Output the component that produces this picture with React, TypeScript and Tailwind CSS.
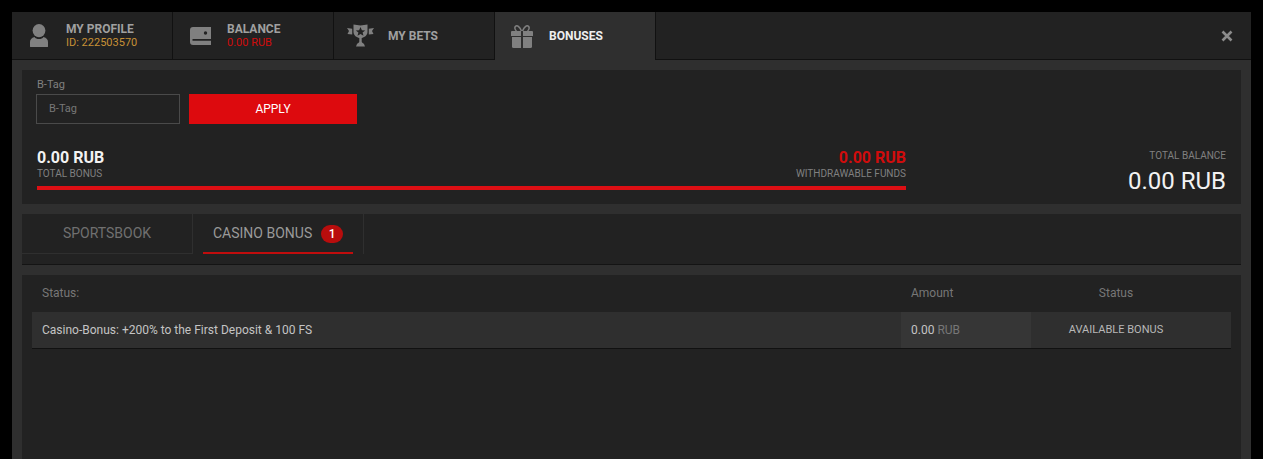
import React from "react";

function ProfileIcon() {
  return (
    <svg width="20" height="23" viewBox="0 0 20 23" fill="#808080">
      <ellipse cx="10" cy="6.6" rx="6.4" ry="6.6" />
      <path d="M5.5 13 C7 15.8 13 15.8 14.5 13 C17.5 14 19 15.5 19 18 V22.5 Q19 23 18 23 H2 Q1 23 1 22.5 V18 C1 15.5 2.5 14 5.5 13Z" />
    </svg>
  );
}

function WalletIcon() {
  return (
    <svg width="21" height="18" viewBox="0 0 21 18" fill="#808080">
      <path d="M3 0 H21 V12 H2.5 V13.8 H21 V18 H3 Q0 18 0 15 V3 Q0 0 3 0Z" />
      <circle cx="15.5" cy="6" r="1.7" fill="#222" />
    </svg>
  );
}

function TrophyIcon() {
  return (
    <svg width="27" height="23" viewBox="0 0 27 23" fill="#808080">
      <path d="M6.5 0.5 L13.5 1.5 L20.5 0.5 V8 C20.5 11.5 17 13.5 14.7 14 V17.5 C14.7 18.5 15.8 19 17 20 L18 22.5 H9 L10 20 C11.2 19 12.3 18.5 12.3 17.5 V14 C10 13.5 6.5 11.5 6.5 8Z" />
      <path d="M13.5 3 L14.9 6.2 L18.2 6.4 L15.6 8.5 L16.5 11.7 L13.5 9.9 L10.5 11.7 L11.4 8.5 L8.8 6.4 L12.1 6.2Z" fill="#222" />
      <path d="M0 4 L5.2 4.8 V10.5 L0.5 10 L2 7Z" />
      <path d="M27 4 L21.8 4.8 V10.5 L26.5 10 L25 7Z" />
    </svg>
  );
}

function GiftIcon() {
  return (
    <svg width="22" height="23" viewBox="0 0 22 23" fill="#808080">
      <path d="M10.5 6 C8.5 1.5 6.5 0.3 5 1 C3.2 1.8 3.6 4.6 5.5 6" fill="none" stroke="#808080" strokeWidth="1.5" />
      <path d="M11.5 6 C13.5 1.5 15.5 0.3 17 1 C18.8 1.8 18.4 4.6 16.5 6" fill="none" stroke="#808080" strokeWidth="1.5" />
      <path d="M1 6 H10 V11 H0 V7 Q0 6 1 6Z" />
      <path d="M12 6 H21 Q22 6 22 7 V11 H12Z" />
      <path d="M1 12 H10 V23 H2.5 Q1 23 1 21.5Z" />
      <path d="M12 12 H21 V21.5 Q21 23 19.5 23 H12Z" />
    </svg>
  );
}

function NavTab({
  icon,
  title,
  sub,
  subColor,
  active,
  className,
}: {
  icon: React.ReactNode;
  title: string;
  sub?: string;
  subColor?: string;
  active?: boolean;
  className: string;
}) {
  return (
    <div
      className={`w-[160px] h-full flex items-center mr-px ${className} ${
        active ? "bg-[#2f2f2f]" : "border-b border-[#111]"
      }`}
    >
      <div className="shrink-0 flex items-center">{icon}</div>
      <div className="flex flex-col">
        <span
          className={`text-[12px] leading-[14px] font-bold uppercase ${
            active ? "text-[#eeeeee]" : "text-[#a0a0a0]"
          }`}
        >
          {title}
        </span>
        {sub && (
          <span className={`text-[11px] leading-[13px] ${subColor}`}>{sub}</span>
        )}
      </div>
    </div>
  );
}

export default function App() {
  return (
    <div className="h-[459px] overflow-hidden bg-black pt-3 px-3 font-['Roboto',sans-serif]">
      <div className="w-[1239px] h-[447px] bg-[#2f2f2f] flex flex-col">
        <header className="h-[48px] shrink-0 flex bg-[#222222]">
          <div className="flex">
            <NavTab
              className="pl-[17px] gap-[17px]"
              icon={<ProfileIcon />}
              title="My Profile"
              sub="ID: 222503570"
              subColor="text-[#c79136]"
            />
            <div className="w-px bg-[#111] -ml-px" />
            <NavTab
              className="pl-[17px] gap-[16px]"
              icon={<WalletIcon />}
              title="Balance"
              sub="0.00 RUB"
              subColor="text-[#d00c0c]"
            />
            <div className="w-px bg-[#111] -ml-px" />
            <NavTab className="pl-[13px] gap-[14px]" icon={<TrophyIcon />} title="My Bets" />
            <div className="w-px bg-[#111] -ml-px" />
            <NavTab className="pl-[16px] gap-[16px]" icon={<GiftIcon />} title="Bonuses" active />
            <div className="w-px bg-[#111] -ml-px" />
          </div>
          <div className="flex-1 border-b border-[#111] flex items-center justify-end pr-[18px]">
            <svg width="12" height="12" viewBox="0 0 12 12" stroke="#8c8c8c" strokeWidth="2.6">
              <path d="M1.5 1.5 L10.5 10.5 M10.5 1.5 L1.5 10.5" />
            </svg>
          </div>
        </header>

        <main className="flex-1 px-[10px] pt-[10px] flex flex-col gap-[10px]">
          <section className="h-[134px] shrink-0 bg-[#222222] px-[15px] pt-[8px] flex">
            <div className="w-[869px]">
              <div className="text-[11px] leading-[13px] text-[#808080]">B-Tag</div>
              <div className="flex gap-[9px] mt-[3px] -ml-px">
                <div className="w-[144px] h-[30px] border border-[#4a4a4a] pl-[12px] flex items-center text-[11px] text-[#777777]">
                  B-Tag
                </div>
                <button className="w-[168px] h-[30px] bg-[#dd0a0e] text-white text-[12px]">
                  APPLY
                </button>
              </div>
              <div className="mt-[25px] flex justify-between">
                <div>
                  <div className="text-[16px] leading-[18px] font-bold text-[#f2f2f2]">0.00 RUB</div>
                  <div className="text-[10px] leading-[12px] text-[#808080] mt-px">TOTAL BONUS</div>
                </div>
                <div className="text-right">
                  <div className="text-[16px] leading-[18px] font-bold text-[#d00c0c]">0.00 RUB</div>
                  <div className="text-[10px] leading-[12px] text-[#808080] mt-px">WITHDRAWABLE FUNDS</div>
                </div>
              </div>
              <div className="h-[4px] bg-[#dd0f14] mt-[6px]" />
            </div>
            <div className="flex-1 flex flex-col items-end pt-[72px]">
              <div className="text-[10px] leading-[12px] text-[#808080]">TOTAL BALANCE</div>
              <div className="text-[24px] leading-[28px] text-[#f2f2f2] mt-[5px]">0.00 RUB</div>
            </div>
          </section>

          <section className="h-[51px] shrink-0 bg-[#222222] border-b border-[#141414] flex items-start">
            <div className="w-[171px] h-[40px] pb-px border-r border-b border-[#2f2f2f] flex items-center justify-center text-[14px] text-[#707070]">
              SPORTSBOOK
            </div>
            <div className="w-[171px] h-[40px] border-r border-[#2f2f2f] px-[10px]">
              <div className="h-[40px] pt-[2px] border-b-2 border-[#c00d0d] flex items-center pl-[10px] gap-[9px] text-[14px] text-[#9a9a9a]">
                <span className="-mt-[2px]">CASINO BONUS</span>
                <span className="w-[22px] h-[18px] rounded-full bg-[#b80d0d] text-white text-[12px] font-medium flex items-center justify-center">
                  1
                </span>
              </div>
            </div>
          </section>

          <section className="flex-1 bg-[#222222] px-[10px]">
            <div className="h-[36px] mb-px flex items-center text-[12px] text-[#777777]">
              <div className="flex-1 pl-[10px]">Status:</div>
              <div className="w-[130px] pl-[10px]">Amount</div>
              <div className="w-[200px] pr-[30px] text-center">Status</div>
            </div>
            <div className="h-[37px] flex bg-[#2f2f2f] border-b border-[#111] items-stretch">
              <div className="flex-1 pl-[10px] flex items-center text-[12px] text-[#c4c4c4]">
                Casino-Bonus: +200% to the First Deposit &amp; 100 FS
              </div>
              <div className="w-[130px] pl-[10px] flex items-center gap-[3px] bg-[#363636] text-[12px] text-[#c4c4c4]">
                0.00 <span className="text-[#777777]">RUB</span>
              </div>
              <div className="w-[200px] pr-[30px] flex items-center justify-center text-[11px] text-[#b8b8b8]">
                AVAILABLE BONUS
              </div>
            </div>
          </section>
        </main>
      </div>
    </div>
  );
}
